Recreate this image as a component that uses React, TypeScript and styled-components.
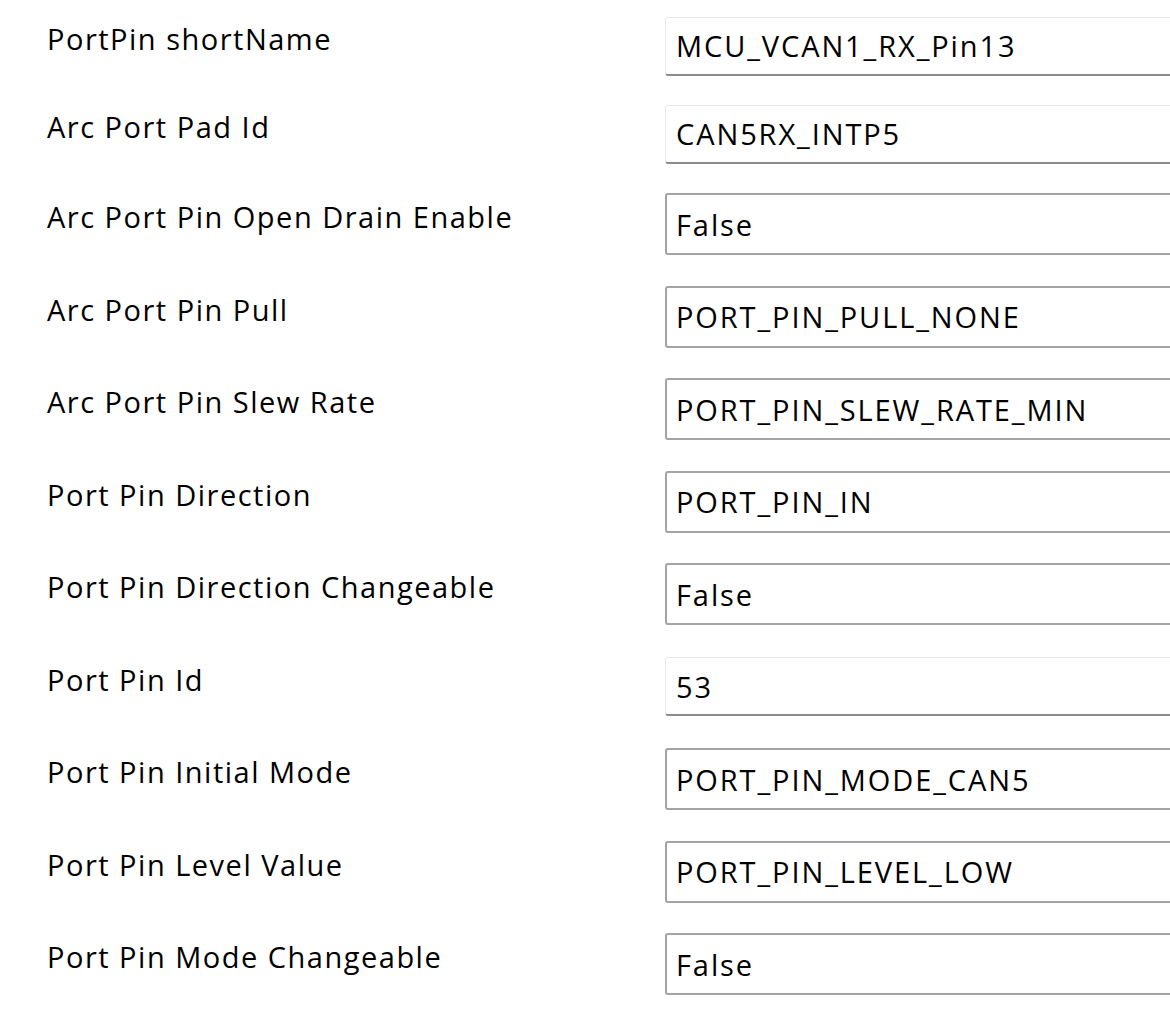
import * as React from 'react';
import styled, { createGlobalStyle } from 'styled-components';

const GlobalStyle = createGlobalStyle`
  html, body {
    margin: 0;
    padding: 0;
    background: #ffffff;
    overflow: hidden;
  }
  body {
    font-family: "Open Sans", "Noto Sans", "Liberation Sans", sans-serif;
    color: #000;
  }
`;

const Form = styled.div`
  width: 1170px;
  height: 1010px;
  padding-top: 2px;
  box-sizing: border-box;
  display: flex;
  flex-direction: column;
  overflow: hidden;
`;

const Row = styled.div<{ $compact?: boolean }>`
  display: flex;
  align-items: center;
  height: ${(p) => (p.$compact ? '88px' : '92.5px')};
  flex-shrink: 0;
`;

const Label = styled.div`
  width: 665px;
  padding-left: 47px;
  padding-bottom: 14px;
  box-sizing: border-box;
  font-size: 29px;
  letter-spacing: 1.5px;
  line-height: 36px;
  white-space: nowrap;
  flex-shrink: 0;
`;

const TextBox = styled.div`
  width: 540px;
  height: 59px;
  box-sizing: border-box;
  flex-shrink: 0;
  display: flex;
  align-items: center;
  padding-left: 10px;
  background: #fff;
  border: 1px solid #e6e6e6;
  border-bottom: 2px solid #8c8c8c;
  border-radius: 3px;
  font-size: 29px;
  letter-spacing: 1.9px;
  white-space: nowrap;
`;

const ComboBox = styled.div`
  width: 540px;
  height: 62px;
  box-sizing: border-box;
  flex-shrink: 0;
  display: flex;
  align-items: center;
  padding-left: 9px;
  background: #fff;
  border: 2px solid #a4a4a4;
  border-radius: 3px;
  font-size: 29px;
  letter-spacing: 1.9px;
  white-space: nowrap;
`;

type Field = { label: string; value: string; kind: 'text' | 'combo' };

const fields: Field[] = [
  { label: 'PortPin shortName', value: 'MCU_VCAN1_RX_Pin13', kind: 'text' },
  { label: 'Arc Port Pad Id', value: 'CAN5RX_INTP5', kind: 'text' },
  { label: 'Arc Port Pin Open Drain Enable', value: 'False', kind: 'combo' },
  { label: 'Arc Port Pin Pull', value: 'PORT_PIN_PULL_NONE', kind: 'combo' },
  { label: 'Arc Port Pin Slew Rate', value: 'PORT_PIN_SLEW_RATE_MIN', kind: 'combo' },
  { label: 'Port Pin Direction', value: 'PORT_PIN_IN', kind: 'combo' },
  { label: 'Port Pin Direction Changeable', value: 'False', kind: 'combo' },
  { label: 'Port Pin Id', value: '53', kind: 'text' },
  { label: 'Port Pin Initial Mode', value: 'PORT_PIN_MODE_CAN5', kind: 'combo' },
  { label: 'Port Pin Level Value', value: 'PORT_PIN_LEVEL_LOW', kind: 'combo' },
  { label: 'Port Pin Mode Changeable', value: 'False', kind: 'combo' },
];

const App: React.FC = (): React.ReactElement => {
  return (
    <>
      <GlobalStyle />
      <Form>
        {fields.map((f, index) => (
          <Row key={`row_${index}`} $compact={index < 2}>
            <Label>{f.label}</Label>
            {f.kind === 'text' ? <TextBox>{f.value}</TextBox> : <ComboBox>{f.value}</ComboBox>}
          </Row>
        ))}
      </Form>
    </>
  );
};

export default App;
